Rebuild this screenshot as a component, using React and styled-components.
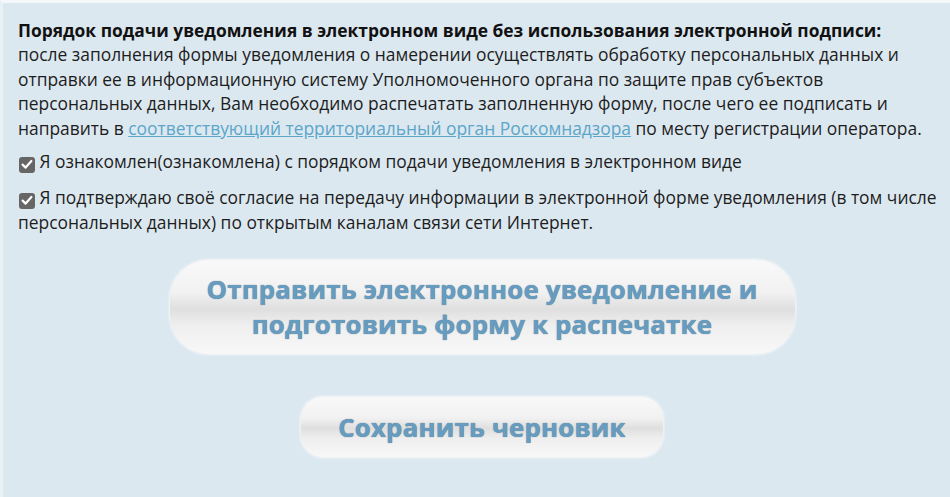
import React from 'react';
import styled, { createGlobalStyle } from 'styled-components';

const GlobalStyle = createGlobalStyle`
  html, body {
    margin: 0;
    padding: 0;
    background: #dce8f0;
  }
  body {
    font-family: "Open Sans", "Liberation Sans", sans-serif;
  }
`;

const Page = styled.div`
  min-height: 497px;
  box-sizing: border-box;
  background: #dce8f0;
  border-top: 3px solid #f4f8fb;
  border-left: 3px solid #e8f1f6;
  padding: 15px 0 0 15px;
  color: #1d1d1d;
  font-size: 17.4px;
  line-height: 24.4px;
  white-space: nowrap;
`;

const Notice = styled.div`
  margin: 0 0 9px;
`;

const Title = styled.b`
  font-weight: 700;
  color: #111;
`;

const Link = styled.a`
  color: #5ba6c9;
  text-decoration: underline;
`;

const CheckRow = styled.label`
  display: block;
  margin: 0 0 12px;
`;

const Box = styled.span`
  display: inline-flex;
  align-items: center;
  justify-content: center;
  width: 16px;
  height: 16px;
  border-radius: 3px;
  background: #666;
  vertical-align: -2px;
  margin-left: 1px;
`;

const Buttons = styled.div`
  display: flex;
  flex-direction: column;
  align-items: center;
  gap: 41px;
  padding-top: 13px;
  padding-right: 4px;
`;

const Button = styled.button`
  width: ${p => p.$w}px;
  height: ${p => p.$h}px;
  border: 1px solid #eef2f5;
  border-radius: ${p => p.$h / 2 - 8}px;
  background: linear-gradient(to bottom, #f9f9f9 0%, #f1f1f1 35%, #dfdfdf 52%, #efefef 70%, #f8f8f8 100%);
  box-shadow: 0 0 2px rgba(255, 255, 255, 0.9);
  font-family: "Open Sans", "Liberation Sans", sans-serif;
  font-weight: 700;
  font-size: 25.8px;
  line-height: 35px;
  letter-spacing: 0.2px;
  color: #679cc1;
  text-shadow: 0 0 1px rgba(30, 60, 90, 0.75);
  cursor: pointer;
  padding: 0;
`;

function Check() {
  return (
    <Box>
      <svg width="12" height="11" viewBox="0 0 12 11">
        <path d="M1.6 5.6 L4.6 8.6 L10.4 2" fill="none" stroke="#fff" strokeWidth="2.2" strokeLinecap="round" strokeLinejoin="round" />
      </svg>
    </Box>
  );
}

export default function App() {
  return (
    <>
      <GlobalStyle />
      <Page>
        <Notice>
          <Title>Порядок подачи уведомления в электронном виде без использования электронной подписи:</Title>
          <br />
          после заполнения формы уведомления о намерении осуществлять обработку персональных данных и
          <br />
          отправки ее в информационную систему Уполномоченного органа по защите прав субъектов
          <br />
          персональных данных, Вам необходимо распечатать заполненную форму, после чего ее подписать и
          <br />
          направить в <Link href="#">соответствующий территориальный орган Роскомнадзора</Link> по месту регистрации оператора.
        </Notice>
        <CheckRow>
          <Check /> Я ознакомлен(ознакомлена) с порядком подачи уведомления в электронном виде
        </CheckRow>
        <CheckRow>
          <Check /> Я подтверждаю своё согласие на передачу информации в электронной форме уведомления (в том числе
          <br />
          персональных данных) по открытым каналам связи сети Интернет.
        </CheckRow>
        <Buttons>
          <Button $w={627} $h={96}>
            Отправить электронное уведомление и
            <br />
            подготовить форму к распечатке
          </Button>
          <Button $w={364} $h={62}>Сохранить черновик</Button>
        </Buttons>
      </Page>
    </>
  );
}
